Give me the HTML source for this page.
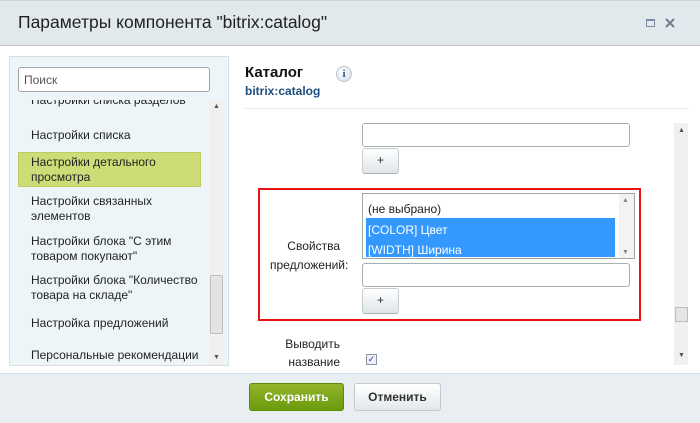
<!DOCTYPE html>
<html><head><meta charset="utf-8"><style>
*{box-sizing:border-box;margin:0;padding:0}
body{width:700px;height:423px;overflow:hidden;font-family:"Liberation Sans",sans-serif;background:#fff;position:relative;font-size:12px;color:#222}
.a{position:absolute}
.hdr{left:0;top:0;width:700px;height:46px;background:#e1e9ec;border-bottom:1px solid #b9c3c7;border-top:1px solid #cfd6d9}
.ttl{left:18px;top:12px;font-size:17.5px;color:#222}
.ftr{left:0;top:373px;width:700px;height:50px;background:#e8eef1;border-top:1px solid #d5dde0}
.lp{left:9px;top:56px;width:220px;height:310px;background:#eef5f8;border:1px solid #d6e0e4}
.srch{left:18px;top:67px;width:192px;height:25px;background:#fff;border:1px solid #9fa7ab;border-radius:3px;padding:5px 5px;color:#555;font-size:12px}
.it{left:31px;font-size:12px;line-height:15px;color:#222}
.sel{left:18px;top:152px;width:183px;height:35px;background:#cddc76;border:1px solid #bccb62}
.inp{background:#fff;border:1px solid #a7b0b5;border-radius:3px}
.btn{width:37px;height:26px;background:linear-gradient(#fff,#dfe5e8);border:1px solid #c5cdd1;border-bottom-color:#a9b2b6;border-radius:3px;text-align:center;line-height:23px;font-size:12px;color:#333}
.sb{background:#f0f0f0}
</style></head><body>
<div class="a hdr"></div>
<div class="a ttl">Параметры компонента "bitrix:catalog"</div>
<div class="a" style="left:646px;top:19px;width:9px;height:8px;border:1px solid #7a8aa0;border-top-width:2px"></div>
<svg class="a" style="left:664px;top:17px" width="12" height="12"><path d="M2 2L10 10M10 2L2 10" stroke="#6e7f94" stroke-width="2"/></svg>

<div class="a lp"></div>
<div class="a srch">Поиск</div>
<div class="a" style="left:10px;top:100px;width:218px;height:265px;overflow:hidden">
 <div class="a it" style="left:21px;top:-7px">Настройки списка разделов</div>
 <div class="a it" style="left:21px;top:28px">Настройки списка</div>
 <div class="a sel" style="left:8px;top:52px"></div>
 <div class="a it" style="left:21px;top:55px">Настройки детального<br>просмотра</div>
 <div class="a it" style="left:21px;top:94px">Настройки связанных<br>элементов</div>
 <div class="a it" style="left:21px;top:134px">Настройки блока "С этим<br>товаром покупают"</div>
 <div class="a it" style="left:21px;top:173px">Настройки блока "Количество<br>товара на складе"</div>
 <div class="a it" style="left:21px;top:216px">Настройка предложений</div>
 <div class="a it" style="left:21px;top:248px">Персональные рекомендации</div>
 <div class="a sb" style="left:200px;top:0;width:13px;height:265px"></div>
 <div class="a" style="left:200px;top:175px;width:13px;height:59px;background:#e4e4e4;border:1px solid #bcbcbc;border-radius:2px"></div>
 <div class="a" style="left:203px;top:3px;font-size:7px;color:#555">▲</div>
 <div class="a" style="left:203px;top:254px;font-size:7px;color:#555">▼</div>
</div>

<div class="a" style="left:245px;top:64px;font-size:15px;font-weight:bold;color:#111">Каталог</div>
<div class="a" style="left:336px;top:66px;width:16px;height:16px;border-radius:50%;background:radial-gradient(circle at 40% 35%,#fff,#d3dde6);border:1px solid #b8c5d0;text-align:center;font:bold 11px/14px 'Liberation Serif',serif;color:#2a5a8c">i</div>
<div class="a" style="left:245px;top:84px;font-size:12px;font-weight:bold;color:#1d4d7e">bitrix:catalog</div>
<div class="a" style="left:245px;top:108px;width:444px;height:1px;background:#e4e8ea"></div>

<div class="a sb" style="left:674px;top:123px;width:14px;height:242px"></div>
<div class="a" style="left:675px;top:307px;width:13px;height:15px;background:#e4e4e4;border:1px solid #bcbcbc"></div>
<div class="a" style="left:678px;top:127px;font-size:7px;color:#555">▲</div>
<div class="a" style="left:678px;top:352px;font-size:7px;color:#555">▼</div>

<div class="a inp" style="left:362px;top:123px;width:268px;height:24px"></div>
<div class="a btn" style="left:362px;top:148px">+</div>

<div class="a" style="left:258px;top:188px;width:383px;height:133px;border:2px solid #ee1111"></div>
<div class="a" style="left:362px;top:193px;width:273px;height:66px;background:#fff;border:1px solid #a0a7ab"></div>
<div class="a" style="left:368px;top:202px;font-size:12px">(не выбрано)</div>
<div class="a" style="left:366px;top:218px;width:249px;height:39px;background:#3399ff"></div>
<div class="a" style="left:368px;top:221px;font-size:12px;color:#fff;line-height:19.5px">[COLOR] Цвет<br>[WIDTH] Ширина</div>
<div class="a" style="left:619px;top:194px;width:15px;height:64px;background:#f3f3f3"></div>
<div class="a" style="left:622px;top:197px;font-size:7px;color:#888">▲</div>
<div class="a" style="left:622px;top:249px;font-size:7px;color:#888">▼</div>
<div class="a" style="left:270px;top:237px;width:70px;text-align:right;font-size:12px;line-height:19px">Свойства<br>предложений:</div>
<div class="a inp" style="left:362px;top:263px;width:268px;height:24px"></div>
<div class="a btn" style="left:362px;top:288px">+</div>

<div class="a" style="left:270px;top:335px;width:70px;text-align:right;font-size:12px;line-height:18px">Выводить<br>название</div>
<div class="a" style="left:366px;top:354px;width:11px;height:11px;border:1px solid #8a96a0;background:#eef;font-size:9px;line-height:9px;color:#2a4a8a;text-align:center">✓</div>

<div class="a ftr"></div>
<div class="a" style="left:249px;top:383px;width:95px;height:28px;background:linear-gradient(#92b52a,#6c9a0e);border:1px solid #5f8a0a;border-radius:3px;color:#fff;font-weight:bold;text-align:center;line-height:26px;font-size:12px">Сохранить</div>
<div class="a" style="left:354px;top:383px;width:87px;height:28px;background:linear-gradient(#fff,#e2e8ea);border:1px solid #c2cacd;border-radius:3px;color:#333;font-weight:bold;text-align:center;line-height:26px;font-size:12px">Отменить</div>
</body></html>
